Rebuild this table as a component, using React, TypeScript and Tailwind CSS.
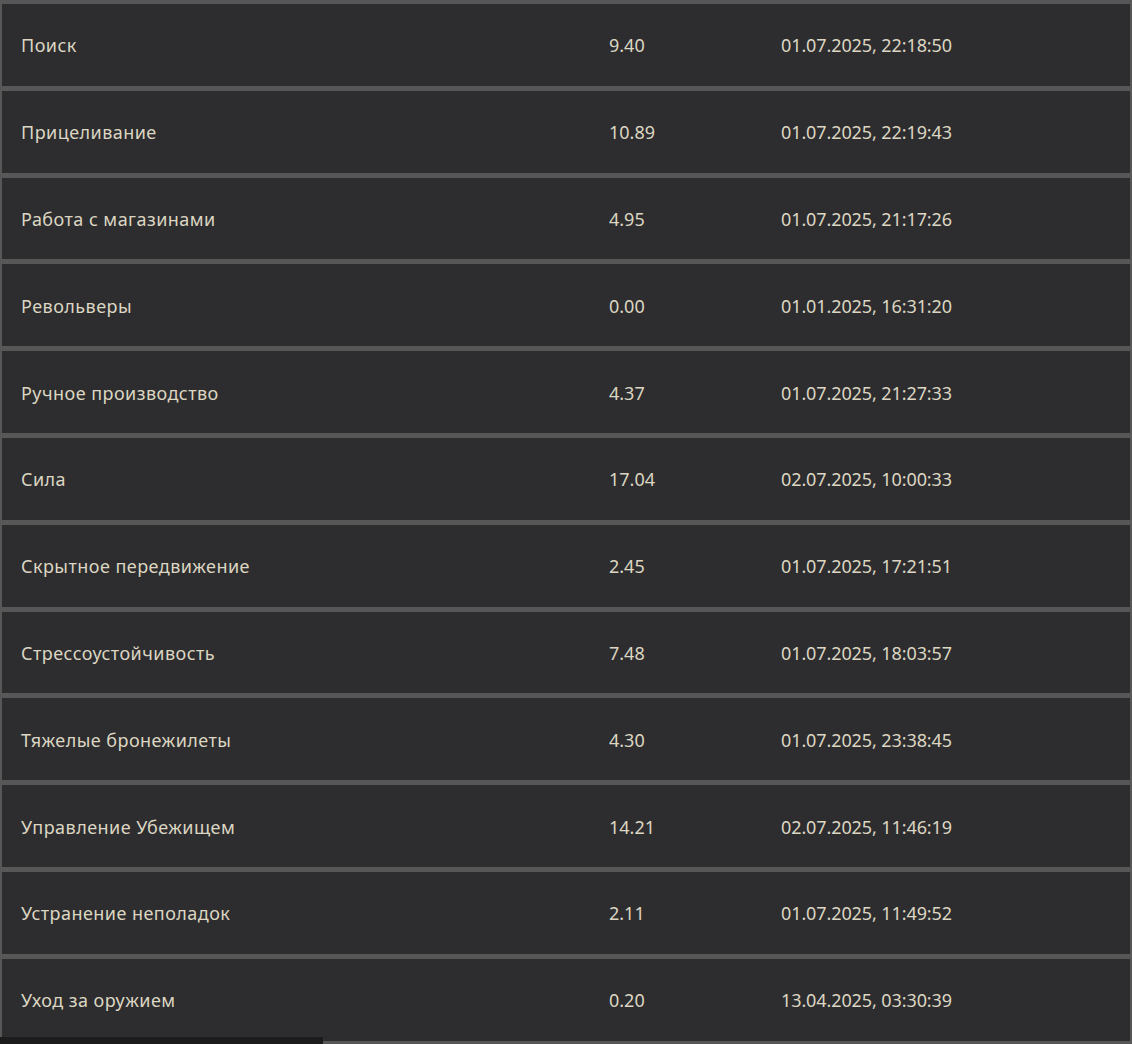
import React from "react";

const rows: [string, string, string][] = [
  ["Поиск", "9.40", "01.07.2025, 22:18:50"],
  ["Прицеливание", "10.89", "01.07.2025, 22:19:43"],
  ["Работа с магазинами", "4.95", "01.07.2025, 21:17:26"],
  ["Револьверы", "0.00", "01.01.2025, 16:31:20"],
  ["Ручное производство", "4.37", "01.07.2025, 21:27:33"],
  ["Сила", "17.04", "02.07.2025, 10:00:33"],
  ["Скрытное передвижение", "2.45", "01.07.2025, 17:21:51"],
  ["Стрессоустойчивость", "7.48", "01.07.2025, 18:03:57"],
  ["Тяжелые бронежилеты", "4.30", "01.07.2025, 23:38:45"],
  ["Управление Убежищем", "14.21", "02.07.2025, 11:46:19"],
  ["Устранение неполадок", "2.11", "01.07.2025, 11:49:52"],
  ["Уход за оружием", "0.20", "13.04.2025, 03:30:39"],
];

export default function App() {
  return (
    <div
      className="relative w-[1132px] h-[1044px] overflow-hidden bg-[#575757] pt-[4px] px-[2px] text-[#dcd6c2] text-[18px]"
      style={{ fontFamily: '"Noto Sans", "Liberation Sans", sans-serif' }}
    >
      <div className="flex flex-col gap-[5px]">
        {rows.map(([name, val, date]) => (
          <div key={name} className="flex items-center h-[81.8px] pt-[2px] bg-[#2d2d2f]">
            <div className="w-[607px] pl-[19px] tracking-[0.45px]">{name}</div>
            <div className="w-[172px]">{val}</div>
            <div className="tracking-[-0.1px]">{date}</div>
          </div>
        ))}
      </div>
      <div className="absolute left-0 bottom-0 w-[323px] h-[7px] bg-[#1c1c1c]" />
    </div>
  );
}
